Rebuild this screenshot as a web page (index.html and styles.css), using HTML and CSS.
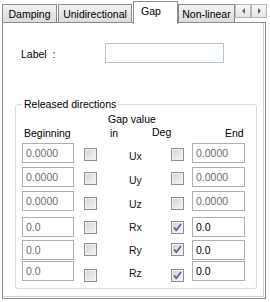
FILE: index.html
```html
<!DOCTYPE html>
<html lang="en">
<head>
    <meta charset="UTF-8">
    <title>Gap</title>
    <link rel="stylesheet" href="styles.css">
</head>
<body>

    <div class="window">
        <div class="tabstrip">
            <div class="tab tab-damping">Damping</div>
            <div class="tab tab-uni">Unidirectional</div>
            <div class="tab tab-active">Gap</div>
            <div class="tab tab-nonlin">Non-linear</div>
            <div class="scroll-btn">
                <svg width="5" height="6" viewBox="0 0 5 6"><path d="M4 0 L1 3 L4 6 Z" fill="#55657a"/></svg>
            </div>
            <div class="scroll-btn">
                <svg width="5" height="6" viewBox="0 0 5 6"><path d="M1 0 L4 3 L1 6 Z" fill="#55657a"/></svg>
            </div>
        </div>

        <div class="panel">
            <div class="label-row">
                <span class="label-text">Label&nbsp;&nbsp;:</span>
                <div class="textbox label-input"></div>
            </div>

            <fieldset class="group">
                <legend>Released directions</legend>

                <div class="head-top">Gap value</div>
                <div class="head-row">
                    <span class="h-begin">Beginning</span>
                    <span class="h-in">in</span>
                    <span class="h-deg">Deg</span>
                    <span class="h-end">End</span>
                </div>

                <!-- translations -->
                <div class="dir-row row-ux">
                    <div class="textbox disabled">0.0000</div>
                    <span class="cb"></span>
                    <span class="axis">Ux</span>
                    <span class="cb"></span>
                    <div class="textbox end disabled">0.0000</div>
                </div>
                <div class="dir-row row-uy">
                    <div class="textbox disabled">0.0000</div>
                    <span class="cb"></span>
                    <span class="axis">Uy</span>
                    <span class="cb"></span>
                    <div class="textbox end disabled">0.0000</div>
                </div>
                <div class="dir-row row-uz">
                    <div class="textbox disabled">0.0000</div>
                    <span class="cb"></span>
                    <span class="axis">Uz</span>
                    <span class="cb"></span>
                    <div class="textbox end disabled">0.0000</div>
                </div>

                <!-- rotations -->
                <div class="dir-row row-rx">
                    <div class="textbox disabled">0.0</div>
                    <span class="cb"></span>
                    <span class="axis">Rx</span>
                    <span class="cb checked"><svg width="11" height="11" viewBox="0 0 11 11"><path d="M2 5.5 L4.3 8.3 L9 2" fill="none" stroke="#4a5e96" stroke-width="1.6"/></svg></span>
                    <div class="textbox end">0.0</div>
                </div>
                <div class="dir-row row-ry">
                    <div class="textbox disabled">0.0</div>
                    <span class="cb"></span>
                    <span class="axis">Ry</span>
                    <span class="cb checked"><svg width="11" height="11" viewBox="0 0 11 11"><path d="M2 5.5 L4.3 8.3 L9 2" fill="none" stroke="#4a5e96" stroke-width="1.6"/></svg></span>
                    <div class="textbox end">0.0</div>
                </div>
                <div class="dir-row row-rz">
                    <div class="textbox disabled">0.0</div>
                    <span class="cb"></span>
                    <span class="axis">Rz</span>
                    <span class="cb checked"><svg width="11" height="11" viewBox="0 0 11 11"><path d="M2 5.5 L4.3 8.3 L9 2" fill="none" stroke="#4a5e96" stroke-width="1.6"/></svg></span>
                    <div class="textbox end">0.0</div>
                </div>
            </fieldset>
        </div>
    </div>

</body>
</html>
```

FILE: styles.css
```css
body {
    margin: 0;
    background-color: #ffffff;
    font-family: "Liberation Sans", Arial, sans-serif;
    font-size: 10.5px;
    line-height: 12px;
    color: #000;
}

.window {
    width: 270px;
    height: 302px;
    padding-left: 2px;
    box-sizing: border-box;
}

/* tabs */
.tabstrip {
    display: flex;
    align-items: flex-start;
    height: 22px;
}

.tab {
    margin-top: 4px;
    height: 18px;
    box-sizing: border-box;
    border: 1px solid #898c95;
    border-bottom: none;
    background: linear-gradient(#f3f3f3, #e6e6e6 50%, #dcdcdc);
    padding-top: 3px;
    text-align: center;
}

.tab + .tab {
    margin-left: 1px;
}

.tab-damping { width: 55px; }
.tab-uni { width: 74px; }
.tab-nonlin { width: 57px; }

.tab-active,
.tab-active + .tab {
    margin-left: 0;
}

.tab-active {
    position: relative;
    z-index: 1;
    width: 45px;
    height: 23px;
    margin-top: 1px;
    background: #ffffff;
    text-align: left;
    padding-left: 7px;
}

.scroll-btn {
    margin-top: 4px;
    width: 16px;
    height: 14px;
    box-sizing: border-box;
    border: 1px solid #b4b8bf;
    background: linear-gradient(#f7f7f7, #e4e4e4);
    display: flex;
    align-items: center;
    justify-content: center;
}

.scroll-btn:first-of-type {
    margin-left: 2px;
}

/* tab page */
.panel {
    width: 264px;
    height: 277px;
    box-sizing: border-box;
    border: 1px solid #898c95;
    background: #ffffff;
    box-shadow: inset -1px -1px 0 #ffffff, inset -2px -2px 0 #d2d4d8;
}

.label-row {
    display: flex;
    align-items: flex-start;
    margin-top: 20px;
    padding-left: 18px;
}

.label-text {
    width: 84px;
    margin-top: 5px;
}

.textbox {
    height: 20px;
    box-sizing: border-box;
    border: 1px solid #afafaf;
    padding: 3px 3px;
    background: #ffffff;
}

.label-input {
    width: 119px;
    border-color: #b2c4d8;
}

.textbox.disabled {
    color: #6d6d6d;
}

/* group box */
.group {
    margin: 35px 0 0 12px;
    width: 242px;
    box-sizing: border-box;
    border: 1px solid #d5dfe5;
    border-radius: 3px;
    padding: 0 0 7px 0;
}

.group legend {
    margin-left: 6px;
    padding: 0 2px;
}

.head-top {
    padding-top: 2px;
    padding-left: 92px;
    line-height: 14px;
}

.head-row {
    display: flex;
    align-items: flex-start;
    line-height: 14px;
}

.h-begin { width: 86px; margin-left: 8px; }
.h-in { width: 42px; }
.h-deg { width: 73px; margin-top: -1px; }

.dir-row {
    display: grid;
    grid-template-columns: 62px 13px 74px 13px 61px;
    align-items: start;
    height: 20px;
    padding-left: 6px;
}

.dir-row .textbox { width: 52px; }
.dir-row .textbox.end { width: 53px; justify-self: end; }

.row-ux { margin-top: 3px; --cb: 5px; --lb: 7px; }
.row-uy { margin-top: 4px; --cb: 5px; --lb: 7px; }
.row-uz { margin-top: 4px; --cb: 6px; --lb: 7px; }
.row-rx { margin-top: 6px; --cb: 4px; --lb: 4px; }
.row-ry { margin-top: 3px; --cb: 3px; --lb: 4px; }
.row-rz { margin-top: 1px; --cb: 8px; --lb: 6px; }

.cb {
    width: 13px;
    height: 13px;
    box-sizing: border-box;
    margin-top: var(--cb);
    border: 1px solid #8f8f8f;
    background: linear-gradient(135deg, #d2d2d2, #f6f6f6);
    box-shadow: inset 0 0 0 1px #f2f2f2;
    display: flex;
    align-items: center;
    justify-content: center;
}

.axis {
    margin-top: var(--lb);
    padding-left: 32px;
    color: #1a1020;
}
```
